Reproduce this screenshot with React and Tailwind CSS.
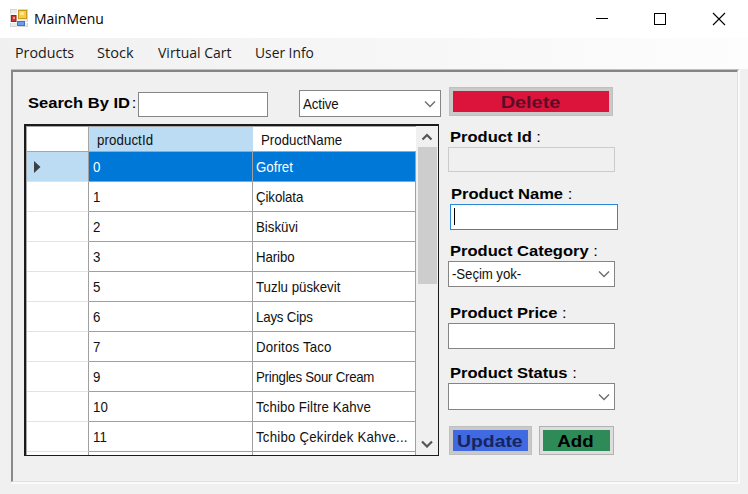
const rows = [
  ['0', 'Gofret', ''],
  ['1', 'Çikolata', 'tracking-[-0.1px]'],
  ['2', 'Bisküvi', ''],
  ['3', 'Haribo', 'tracking-[-0.1px]'],
  ['5', 'Tuzlu püskevit', ''],
  ['6', 'Lays Cips', 'tracking-[-0.2px]'],
  ['7', 'Doritos Taco', 'tracking-[0.2px]'],
  ['9', 'Pringles Sour Cream', 'tracking-[-0.3px]'],
  ['10', 'Tchibo Filtre Kahve', 'tracking-[0.12px]'],
  ['11', 'Tchibo Çekirdek Kahve...', 'tracking-[0.23px]'],
];

function Label({ className = '', colon = '', children }) {
  return (
    <div className={`origin-left scale-x-[1.14] whitespace-nowrap text-[14.5px] leading-5 font-bold text-black ${className}`}>
      {children} <span className={`font-normal ${colon}`}>:</span>
    </div>
  );
}

function Narrow({ className = '', children }) {
  return <span className={`inline-block origin-left scale-x-[0.885] whitespace-pre text-[15px] leading-5 ${className}`}>{children}</span>;
}

function Chevron({ className = '', stroke = '#6a6a6a', width = 1.3, up = false }) {
  return (
    <svg className={className} width="12" height="8" viewBox="0 0 12 8" fill="none" stroke={stroke} strokeWidth={width}>
      <path d={up ? 'M1.5 6.5 6 2l4.5 4.5' : 'M1 1.5l5 5 5-5'} />
    </svg>
  );
}

function Select({ className = '', children }) {
  return (
    <div className={`flex shrink-0 items-center justify-between border border-[#858585] bg-white pr-1 pl-[3px] text-[#111] ${className}`}>
      <Narrow className="tracking-[-0.1px]">{children}</Narrow>
      <Chevron />
    </div>
  );
}

function TitleBar() {
  return (
    <header className="flex h-[38px] items-start bg-white text-black">
      <svg className="mt-[9px] ml-[10px]" width="18" height="18" viewBox="0 0 18 18">
        <rect x="0.5" y="0.5" width="17" height="17" fill="#e9eaec" stroke="#d3d5d8" />
        <path d="M7.5 0v18M0 5h8M0 13.500h18" stroke="#fff" strokeWidth="1" />
        <rect x="8.500" y="1.500" width="8" height="8" fill="#f7cd45" stroke="#c99a1c" />
        <rect x="10" y="3" width="4" height="3" fill="#ffe88c" />
        <rect x="1.500" y="6.500" width="4.500" height="6" fill="#c93a30" stroke="#9e1f1c" />
        <rect x="3" y="8" width="2" height="2" fill="#f0918a" />
        <rect x="7.500" y="12.500" width="7" height="4" fill="#6a9cea" stroke="#4172ca" />
      </svg>
      <span className="mt-[8px] ml-[6px] origin-left scale-x-[0.93] font-['Open_Sans',sans-serif] text-[15px] leading-5">MainMenu</span>
      <svg className="mt-[12px] mr-[22px] ml-auto" width="131" height="14" viewBox="0 0 131 14" fill="none" stroke="#000" shapeRendering="crispEdges">
        <path d="M1 6.500h12" />
        <rect x="59.500" y="1.500" width="11" height="11" />
        <path d="M118 1l12 12M130 1l-12 12" shapeRendering="auto" strokeWidth="1.100" />
      </svg>
    </header>
  );
}

function Menu() {
  return (
    <nav className="flex h-[31px] items-start bg-linear-to-r from-[#f0f0f0] to-[#fdfdfd] pt-[4px] pl-[15px] font-['Open_Sans',sans-serif] text-[15px] leading-5 whitespace-nowrap text-[#1a1a1a]">
      <div className="w-[82px]"><span className="inline-block origin-left scale-x-[0.95]">Products</span></div>
      <div className="w-[61px]"><span className="inline-block origin-left scale-x-[0.97]">Stock</span></div>
      <div className="w-[97px]"><span className="inline-block origin-left scale-x-[0.935]">Virtual Cart</span></div>
      <div><span className="inline-block origin-left scale-x-[0.92]">User Info</span></div>
    </nav>
  );
}

function DataGrid() {
  return (
    <div className="mt-[7px] flex h-[332px] w-[415px] border-t-2 border-r border-b border-l-2 border-[#1b1b1b] bg-white">
      <div className="w-[390px] overflow-hidden border-l border-[#a6a6a6] text-[#111]">
        <div className="flex h-[26px] border-t border-[#a6a6a6]">
          <div className="w-[62px] border-r border-b border-[#a6a6a6]" />
          <div className="w-[164px] border-b border-[#a6a6a6] bg-[#bcdcf4] pt-px pl-2"><Narrow className="tracking-[0.1px]">productId</Narrow></div>
          <div className="w-[163px] border-b border-[#a6a6a6] pt-px pl-2"><Narrow>ProductName</Narrow></div>
        </div>
        {rows.map(([id, name, tracking], i) => (
          <div key={id} className={`flex h-[30px] ${i === 0 ? 'text-white' : ''}`}>
            <div className={`flex w-[62px] items-center border-r border-b border-r-[#a0a0a0] border-b-[#e3e3e3] pl-[7px] ${i === 0 ? 'bg-[#bcdcf4]' : ''}`}>
              {i === 0 && <svg width="7" height="12" viewBox="0 0 7 12"><path d="M0 0l6.500 6L0 12z" fill="#3c4043" /></svg>}
            </div>
            <div className={`w-[164px] border-r border-b border-[#a0a0a0] pt-[3px] pl-1 ${i === 0 ? 'bg-[#0078d7]' : ''}`}><Narrow>{id}</Narrow></div>
            <div className={`w-[163px] border-r border-b border-[#a0a0a0] pt-[3px] pl-[3px] ${i === 0 ? 'bg-[#0078d7]' : ''}`}><Narrow className={tracking}>{name}</Narrow></div>
          </div>
        ))}
        <div className="flex h-[3px]">
          <div className="w-[62px] border-r border-[#a0a0a0]" />
          <div className="w-[164px] border-r border-[#a0a0a0]" />
          <div className="w-[163px] border-r border-[#a0a0a0]" />
        </div>
      </div>
      <div className="flex w-[22px] flex-col items-center bg-[#f0f0f0]">
        <Chevron className="mt-[7px]" stroke="#555" width={2.2} up />
        <div className="mt-[6px] h-[137px] w-[19px] bg-[#cdcdcd]" />
        <Chevron className="mt-auto mb-[7px]" stroke="#555" width={2.2} />
      </div>
    </div>
  );
}

function Button({ className = '', children }) {
  return (
    <button className={`flex h-[29px] items-center justify-center border text-[17px] leading-5 font-bold ${className}`}>
      {children}
    </button>
  );
}

function ProductForm() {
  return (
    <div className="ml-[9px] w-[170px] pt-[15px]">
      <Button className="ml-px w-[164px] border-[#c0c0c0] bg-[#c9c9c9] p-[3px] text-[#5c0d25]">
        <span className="flex h-full w-full items-center justify-center bg-[#dc143c] pt-[2px]"><span className="scale-x-117">Delete</span></span>
      </Button>
      <Label className="mt-[11px] ml-[2px]">Product Id</Label>
      <div className="h-[25px] w-[167px] border border-[#cccccc] bg-[#f0f0f0]" />
      <Label className="mt-[12px] ml-[3px]">Product Name</Label>
      <div className="ml-[2px] flex h-[26px] w-[168px] items-center border border-[#2b87d8] bg-white pl-[3px]">
        <div className="mb-[2px] h-[17px] w-px bg-black" />
      </div>
      <Label className="mt-[11px] ml-[2px]">Product Category</Label>
      <Select className="h-[26px] w-[167px]">-Seçim yok-</Select>
      <Label className="mt-[16px] ml-[2px]">Product Price</Label>
      <div className="h-[26px] w-[167px] border border-[#858585] bg-white" />
      <Label className="mt-[14px] ml-[2px]">Product Status</Label>
      <Select className="h-[27px] w-[167px]" />
      <div className="mt-[16px] ml-px flex gap-[7px]">
        <Button className="w-[83px] border-[#c0c0c0] bg-[#c9c9c9] p-[3px] text-[#16255f]">
          <span className="flex h-full w-full items-center justify-center bg-[#4169e1] pt-[2px] pr-[2px]"><span className="scale-x-114">Update</span></span>
        </Button>
        <Button className="w-[75px] border-[#b2b2b2] bg-[#dddddd] p-[3px] text-black">
          <span className="flex h-full w-full items-center justify-center bg-[#2e8b57] pt-[2px] pr-[2px]"><span className="scale-x-110">Add</span></span>
        </Button>
      </div>
    </div>
  );
}

export default function App() {
  return (
    <div className="h-[494px] w-[748px] overflow-hidden bg-[#f0f0f0] font-['Liberation_Sans',Arial,sans-serif]">
      <TitleBar />
      <Menu />
      <main className="mr-[8px] ml-[11px] h-[415px] border-t border-r-2 border-b-2 border-t-[#c0c0c0] border-r-[#fafafa] border-b-[#fafafa]">
        <div className="flex h-[412px] border-t-2 border-r border-b border-l-2 border-t-[#858585] border-r-[#e0e0e0] border-b-[#e0e0e0] border-l-[#8a8a8a]">
          <div className="ml-[11px] w-[415px] pt-[18px]">
            <div className="flex h-[27px]">
              <div className="w-[114px] shrink-0 pt-[3px] pl-[4px]"><Label className="w-[96px]" colon="-ml-[2.5px]">Search By ID</Label></div>
              <div className="mt-[2px] h-[25px] w-[130px] shrink-0 border border-[#858585] bg-white" />
              <Select className="ml-[31px] h-[27px] w-[142px]">Active</Select>
            </div>
            <DataGrid />
          </div>
          <ProductForm />
        </div>
      </main>
    </div>
  );
}
